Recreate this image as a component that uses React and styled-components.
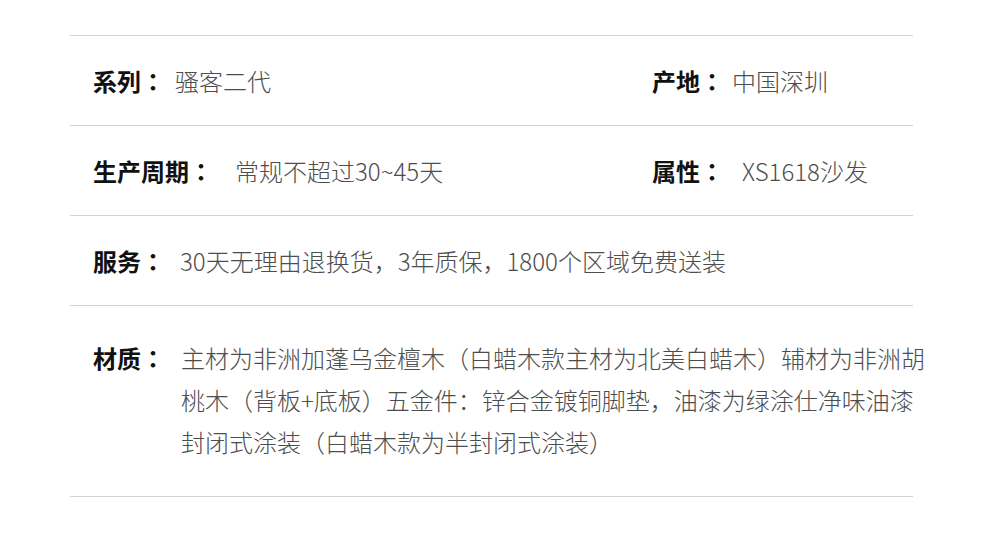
import React from "react";
import styled, { createGlobalStyle } from "styled-components";

const GlobalStyle = createGlobalStyle`
  body {
    margin: 0;
    background: #fff;
    font-family: "Noto Sans CJK SC", "Noto Sans", sans-serif;
  }
`;

const Root = styled.div`
  width: 990px;
  height: 548px;
  padding-top: 35px;
  box-sizing: border-box;
`;

const Table = styled.div`
  width: 843px;
  margin-left: 70px;
  border-bottom: 1px solid #d2d2d2;
`;

const Row = styled.div`
  display: flex;
  align-items: ${(p) => (p.$multi ? "flex-start" : "center")};
  height: ${(p) => (p.$multi ? "auto" : "89px")};
  padding: ${(p) => (p.$multi ? "31px 0 33px 23px" : "0 0 0 23px")};
  border-top: 1px solid #d2d2d2;
`;

const Cell = styled.div`
  display: flex;
  align-items: flex-start;
  width: ${(p) => p.$width || "auto"};
  flex-shrink: 0;
`;

// JP glyphs centre the full-width colon, like the reference
const Label = styled.span`
  font-family: "Noto Sans CJK JP", "Noto Sans CJK SC", sans-serif;
  font-size: 24px;
  line-height: 42px;
  font-weight: 700;
  color: #111;
  white-space: nowrap;
`;

const Value = styled.span`
  margin-left: ${(p) => p.$gap}px;
  font-size: 24px;
  line-height: 42px;
  font-weight: 300;
  color: #4d4d4d;
  width: ${(p) => p.$width || "auto"};
  flex-shrink: 0;
  white-space: ${(p) => (p.$width ? "normal" : "nowrap")};
`;

const App = () => (
  <Root>
    <GlobalStyle />
    <Table>
      <Row>
        <Cell $width="559px">
          <Label>系列：</Label>
          <Value $gap={10}>骚客二代</Value>
        </Cell>
        <Cell>
          <Label>产地：</Label>
          <Value $gap={8}>中国深圳</Value>
        </Cell>
      </Row>
      <Row>
        <Cell $width="559px">
          <Label>生产周期：</Label>
          <Value $gap={22}>常规不超过30~45天</Value>
        </Cell>
        <Cell>
          <Label>属性：</Label>
          <Value $gap={18}>XS1618沙发</Value>
        </Cell>
      </Row>
      <Row>
        <Cell>
          <Label>服务：</Label>
          <Value $gap={15}>30天无理由退换货，3年质保，1800个区域免费送装</Value>
        </Cell>
      </Row>
      <Row $multi>
        <Cell>
          <Label>材质：</Label>
          <Value $gap={16} $width="748px">
            主材为非洲加蓬乌金檀木（白蜡木款主材为北美白蜡木）辅材为非洲胡桃木（背板+底板）五金件：锌合金镀铜脚垫，油漆为绿涂仕净味油漆封闭式涂装（白蜡木款为半封闭式涂装）
          </Value>
        </Cell>
      </Row>
    </Table>
  </Root>
);

export default App;
